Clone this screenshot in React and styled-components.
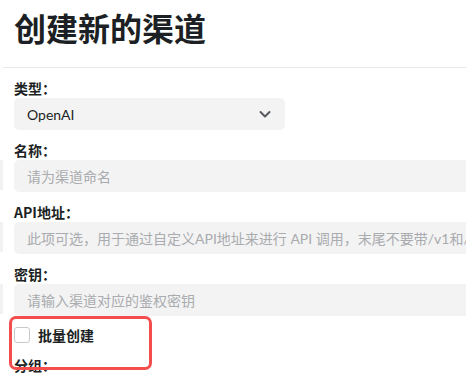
import React from "react";
import styled, { createGlobalStyle } from "styled-components";

const Global = createGlobalStyle`
  html, body { margin: 0; padding: 0; background: #fff; overflow: hidden; }
  body { font-family: "Lato", "Noto Sans CJK SC", sans-serif; color: #1c1f23; }
`;

const Page = styled.div`
  width: 466px;
  height: 376px;
  overflow: hidden;
  position: relative;
`;

const Header = styled.div`
  padding: 5px 0 18px 14px;
  border-bottom: 1px solid #e9e9ea;
  margin-left: 3px;
  padding-left: 11px;
`;

const Title = styled.h1`
  margin: 0;
  font-family: "Noto Sans CJK SC", sans-serif;
  font-size: 32px;
  line-height: 44px;
  font-weight: 700;
  color: #1c1f23;
  letter-spacing: 0;
`;

const Form = styled.div`
  display: flex;
  flex-direction: column;
  padding: 10px 0 0 14px;
  position: relative;
`;

const Label = styled.div`
  font-family: "Noto Sans CJK SC", sans-serif;
  font-size: 14px;
  line-height: 20px;
  font-weight: 600;
  color: #1c1f23;
  margin-top: ${(p) => (p.$first ? "0" : "10px")};
`;

const Box = styled.div`
  position: relative;
  box-sizing: border-box;
  height: 32px;
  width: ${(p) => (p.$narrow ? "271px" : "520px")};
  background: #f3f3f4;
  border-radius: 5px;
  display: flex;
  align-items: center;
  justify-content: space-between;
  padding: 0 12px 0 13px;
  font-size: 14px;
  white-space: nowrap;
  &::before {
    content: ${(p) => (p.$sliver ? '""' : "none")};
    position: absolute;
    left: -14px;
    top: 0;
    width: 3px;
    height: 30px;
    background: #f2f2f2;
  }
`;

const Value = styled.span`
  font-family: "Lato", "Noto Sans CJK SC", sans-serif;
  color: #1c1f23;
`;

const Placeholder = styled.span`
  font-family: "Lato", "Noto Sans CJK SC", sans-serif;
  color: #a9abae;
`;

const CheckRow = styled.label`
  display: flex;
  align-items: center;
  gap: 8px;
  margin-top: 9px;
  height: 20px;
`;

const CheckBox = styled.span`
  box-sizing: border-box;
  width: 16px;
  height: 16px;
  border: 1px solid #c6cacd;
  border-radius: 3px;
  background: #fff;
`;

const CheckText = styled.span`
  font-family: "Noto Sans CJK SC", sans-serif;
  font-size: 14px;
  font-weight: 600;
  color: #1c1f23;
`;

const Highlight = styled.div`
  position: absolute;
  left: 9px;
  top: 316px;
  width: 143px;
  height: 54px;
  box-sizing: border-box;
  border: 3px solid #f34d4d;
  border-radius: 7px;
  pointer-events: none;
`;

const Chevron = () => (
  <svg width="16" height="16" viewBox="0 0 16 16" fill="none">
    <polyline points="3.5,6 8,10.5 12.5,6" stroke="#55585c" strokeWidth="2" strokeLinecap="round" strokeLinejoin="round" />
  </svg>
);

export default function App() {
  return (
    <Page>
      <Global />
      <Header>
        <Title>创建新的渠道</Title>
      </Header>
      <Form>
        <Label $first>类型：</Label>
        <Box $narrow>
          <Value>OpenAI</Value>
          <Chevron />
        </Box>
        <Label>名称：</Label>
        <Box $sliver>
          <Placeholder>请为渠道命名</Placeholder>
        </Box>
        <Label>API地址：</Label>
        <Box $sliver>
          <Placeholder>此项可选，用于通过自定义API地址来进行 API 调用，末尾不要带/v1和/</Placeholder>
        </Box>
        <Label>密钥：</Label>
        <Box $sliver>
          <Placeholder>请输入渠道对应的鉴权密钥</Placeholder>
        </Box>
        <CheckRow>
          <CheckBox />
          <CheckText>批量创建</CheckText>
        </CheckRow>
        <Label>分组：</Label>
      </Form>
      <Highlight />
    </Page>
  );
}
